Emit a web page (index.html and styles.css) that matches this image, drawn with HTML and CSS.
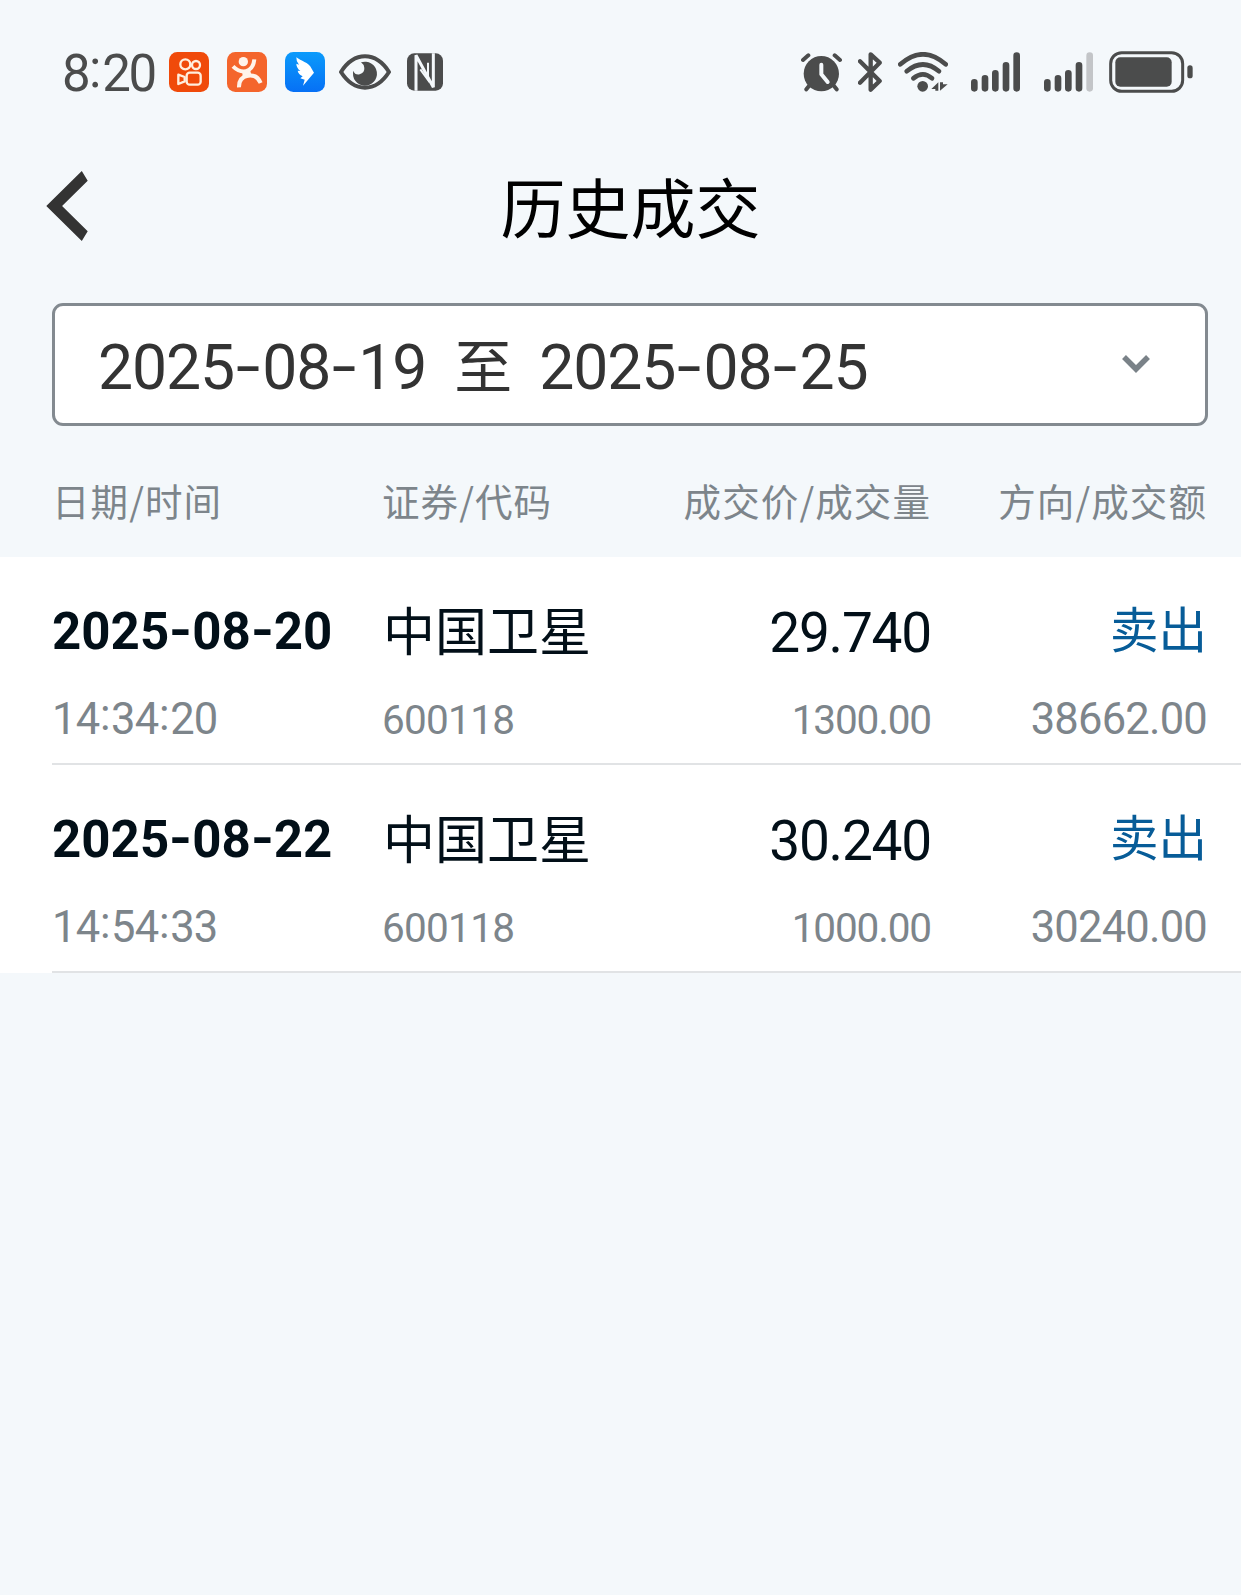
FILE: index.html
```html
<!DOCTYPE html>
<html lang="zh-CN">

<head>
  <meta charset="UTF-8">
  <title>历史成交</title>
  <link rel="stylesheet" href="styles.css">
</head>

<body>

  <div class="status">
    <span class="clock">8<i class="colon">:</i>20</span>
    <svg class="app" viewBox="0 0 120 120">
      <rect width="120" height="120" rx="25" fill="#f04a0a"/>
      <g fill="none" stroke="#ffeedd" stroke-width="7" stroke-linejoin="round">
        <circle cx="49" cy="37" r="15"/>
        <circle cx="81" cy="39" r="12"/>
        <rect x="53" y="62" width="42" height="36" rx="9"/>
        <path d="M28 68L47 75V88L28 96Z"/>
      </g>
    </svg>
    <svg class="app" viewBox="0 0 120 120">
      <rect width="120" height="120" rx="25" fill="#f4652c"/>
      <circle cx="49" cy="29" r="14" fill="#fff3ea"/>
      <g fill="none" stroke="#fff3ea" stroke-width="12">
        <path d="M18 43Q36 61 56 58Q79 52 82 22"/>
        <path d="M36 106Q35 76 62 71Q90 66 101 93"/>
      </g>
      <path d="M45 58L69 54L75 74L48 78Z" fill="#fff3ea"/>
    </svg>
    <svg class="app" viewBox="0 0 120 120">
      <defs>
        <linearGradient id="blue" x1="0" y1="0" x2="0" y2="1">
          <stop offset="0" stop-color="#0b9bfb"/>
          <stop offset="1" stop-color="#0670f5"/>
        </linearGradient>
      </defs>
      <rect width="120" height="120" rx="25" fill="url(#blue)"/>
      <path d="M34 16C48 28 70 30 80 50L87 62L54 101L59 83L46 79L53 73Q40 67 38 56L46 57Q34 47 34 35L42 38Q33 28 34 16Z" fill="#fff"/>
    </svg>
    <svg class="eye" viewBox="0 0 156 108">
      <path d="M6 54Q36 7 78 7Q120 7 150 54Q120 101 78 101Q36 101 6 54Z" fill="none" stroke="#4b4c4c" stroke-width="12" stroke-linejoin="round"/>
      <path d="M66 25A36 36 0 1 1 43 50Q48 64 62 61Q77 56 76 42Q75 31 66 25Z" fill="#4b4c4c"/>
    </svg>
    <svg class="nfc" viewBox="0 0 108 112">
      <rect width="108" height="112" rx="22" fill="#4b4c4c"/>
      <path d="M27 112V6L79 102V0" fill="none" stroke="#f4f8fb" stroke-width="9"/>
      <path d="M40 48L63 80V28" fill="none" stroke="#f4f8fb" stroke-width="6"/>
    </svg>

    <svg class="alarm" viewBox="0 0 123 117">
      <g fill="none" stroke="#4b4c4c" stroke-width="12" stroke-linecap="round">
        <path d="M6 21L22 7M101 7L117 21M24 99L16 109M99 99L107 109"/>
      </g>
      <circle cx="61" cy="62" r="53" fill="#4b4c4c"/>
      <path d="M61 35V64L80 87" fill="none" stroke="#f4f8fb" stroke-width="12" stroke-linecap="round" stroke-linejoin="round"/>
    </svg>
    <svg class="bluetooth" viewBox="0 0 72 120">
      <path d="M6 28L65 87L38 113V7L65 32L6 92" fill="none" stroke="#4b4c4c" stroke-width="13" stroke-linecap="round" stroke-linejoin="round"/>
    </svg>
    <svg class="wifi" viewBox="0 0 150 120">
      <g fill="none" stroke="#4b4c4c" stroke-width="14" stroke-linecap="round">
        <path d="M7 37Q75 -23 143 37"/>
        <path d="M26 58Q75 17 123 58"/>
        <path d="M46 79Q75 55 102 79"/>
      </g>
      <circle cx="74" cy="103" r="16" fill="#4b4c4c"/>
      <path d="M121 91V116H112V111H100ZM126 91H135V97H149L126 116Z" fill="#4b4c4c"/>
    </svg>
    <svg class="signal" viewBox="0 0 150 120">
      <path d="M10 91V109M42 79V109M73 64V109M105 40V109M137 11V109" stroke="#4b4c4c" stroke-width="20" stroke-linecap="round"/>
    </svg>
    <svg class="signal" viewBox="0 0 150 120">
      <path d="M10 91V109M42 79V109M73 64V109M105 40V109" stroke="#4b4c4c" stroke-width="20" stroke-linecap="round"/>
      <path d="M137 11V109" stroke="#c3c5c8" stroke-width="20" stroke-linecap="round"/>
    </svg>
    <svg class="battery" viewBox="0 0 252 126">
      <rect x="5" y="5" width="216" height="116" rx="33" fill="none" stroke="#4b4c4c" stroke-width="9"/>
      <rect x="19" y="19" width="169" height="88" rx="15" fill="#4b4c4c"/>
      <rect x="235" y="43" width="16" height="39" rx="8" fill="#4b4c4c"/>
    </svg>
  </div>

  <header class="title-bar">
    <svg class="back" viewBox="0 0 42 72">
      <path d="M36 0L42 10L16 35.500L42 61L36 71L0 35.500Z" fill="#333"/>
    </svg>
    <h1>历史成交</h1>
  </header>

  <div class="range">
    <span class="date">2025<i>-</i>08<i>-</i>19</span>
    <span class="to">至</span>
    <span class="date">2025<i>-</i>08<i>-</i>25</span>
    <svg class="arrow" viewBox="0 0 28 18">
      <path d="M2 2L14 14L26 2" fill="none" stroke="#7a8288" stroke-width="5.500"/>
    </svg>
  </div>

  <div class="row head">
    <div>日期/时间</div>
    <div>证券/代码</div>
    <div class="right">成交价/成交量</div>
    <div class="right">方向/成交额</div>
  </div>

  <div class="list">
    <div class="row item">
      <div class="day"><b>2025<i>-</i>08<i>-</i>20</b><span>14<i class="colon">:</i>34<i class="colon">:</i>20</span></div>
      <div class="stock"><b>中国卫星</b><span>600118</span></div>
      <div class="price right"><b>29.740</b><span>1300.00</span></div>
      <div class="side right"><b>卖出</b><span>38662.00</span></div>
    </div>
    <div class="row item">
      <div class="day"><b>2025<i>-</i>08<i>-</i>22</b><span>14<i class="colon">:</i>54<i class="colon">:</i>33</span></div>
      <div class="stock"><b>中国卫星</b><span>600118</span></div>
      <div class="price right"><b>30.240</b><span>1000.00</span></div>
      <div class="side right"><b>卖出</b><span>30240.00</span></div>
    </div>
  </div>

</body>

</html>
```
FILE: styles.css
```css
* {
  box-sizing: border-box;
}

body {
  margin: 0;
  min-height: 1595px;
  background: #f4f8fb;
  font-family: "Noto Sans CJK SC", sans-serif;
  color: #020f18;
}

svg {
  display: block;
  flex: none;
}

/* numbers */
.clock,
.date,
.day,
.price,
.item span {
  font-family: Roboto, "Noto Sans CJK SC", sans-serif;
  letter-spacing: -0.018em;
}

/* the dash is wider than the one in the font */
i {
  display: inline-block;
  width: 0.45em;
  font-style: normal;
  text-align: center;
  letter-spacing: 0;
  transform: translateY(-1px) scaleX(1.4);
}

.colon {
  width: 0.27em;
  transform: translateY(-0.085em);
}

/* status bar */
.status {
  display: flex;
  align-items: center;
  height: 144px;
  padding-left: 62px;
  color: #4b4c4c;
}

.clock {
  width: 107px;
  margin-top: 4px;
  font-size: 51px;
  line-height: 60px;
  letter-spacing: -0.045em;
}

.app {
  width: 40px;
  height: 40px;
  margin-right: 18px;
}

.eye {
  width: 52px;
  height: 36px;
  margin-left: -4px;
}

.nfc {
  width: 36px;
  height: 38px;
  margin-left: 16px;
}

.alarm {
  width: 41px;
  height: 39px;
  margin-left: 358px;
}

.bluetooth {
  width: 24px;
  height: 40px;
  margin-left: 16px;
}

.wifi {
  width: 50px;
  height: 40px;
  margin-left: 16px;
}

.signal {
  width: 50px;
  height: 40px;
  margin-left: 23px;
}

.battery {
  width: 84px;
  height: 42px;
  margin-left: 15px;
}

/* title */
.title-bar {
  display: grid;
  grid-template-columns: 220px 1fr 200px;
  align-items: center;
  height: 124px;
}

.back {
  width: 42px;
  height: 71px;
  margin-left: 46px;
}

h1 {
  margin: -2px 0 0;
  font-size: 65px;
  font-weight: 400;
  line-height: 80px;
  text-align: center;
  color: #000;
}

/* date range */
.range {
  display: flex;
  align-items: center;
  height: 123px;
  margin: 35px 33px 0 52px;
  padding: 0 55px 0 43px;
  border: 3px solid #838a90;
  border-radius: 11px;
  background: #fff;
  line-height: 80px;
  color: #333;
}

.date {
  margin-top: 6px;
  font-size: 62.5px;
}

.to {
  margin: -3px 27px 0 28px;
  font-size: 58px;
}

.arrow {
  width: 28px;
  height: 18px;
  margin-top: -2px;
  margin-left: auto;
}

/* table */
.row {
  display: grid;
  grid-template-columns: 330px 220px 329px 276px;
  margin-left: 52px;
}

.right {
  text-align: right;
}

.head {
  height: 131px;
  padding-top: 49px;
  font-size: 37.5px;
  line-height: 50px;
  letter-spacing: 1.1px;
  color: #7d858b;
}

.list {
  background: #fff;
}

.item {
  height: 208px;
  border-bottom: 2px solid #e1e3e5;
}

.item b {
  display: block;
  font-weight: 400;
  line-height: 60px;
}

.item span {
  display: block;
  line-height: 50px;
  color: #7d858b;
}

.day {
  padding-top: 45px;
}

.day b {
  margin-bottom: 33px;
  font-size: 51px;
  font-weight: 700;
  letter-spacing: 0.001em;
}

.day i {
  transform: translateY(-1px) scaleX(1.15);
}

.day .colon {
  transform: translateY(-0.085em);
}

.stock {
  padding-top: 42px;
}

.stock b {
  margin-bottom: 36px;
  padding-left: 1px;
  font-size: 52px;
}

.price {
  padding-top: 46px;
}

.price b {
  margin-bottom: 32px;
  font-size: 55px;
  letter-spacing: -0.022em;
}

.side {
  padding-top: 40px;
}

.side b {
  margin-bottom: 38px;
  font-size: 48.5px;
  color: #075c98;
}

.day span,
.side span {
  font-size: 43.5px;
}

.stock span,
.price span {
  font-size: 40.5px;
}

.price span {
  letter-spacing: -0.028em;
}
```
